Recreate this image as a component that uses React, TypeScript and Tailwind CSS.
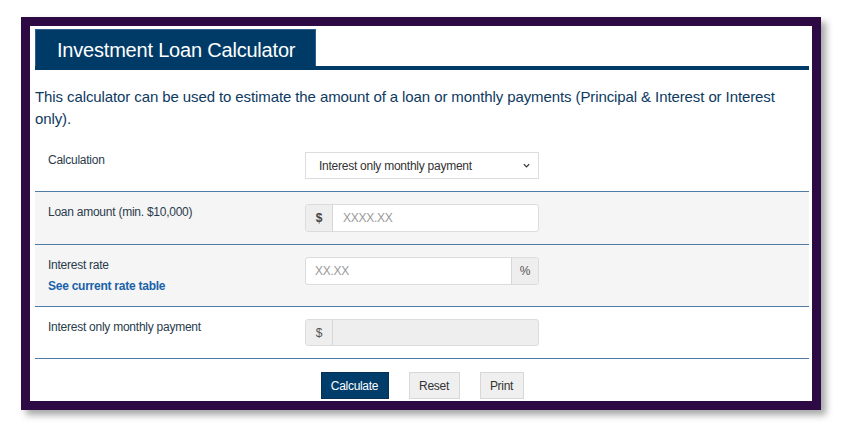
import React from "react";

const font = { fontFamily: '"Liberation Sans", Arial, sans-serif' };

type RowProps = {
  shaded?: boolean;
  label: React.ReactNode;
  children: React.ReactNode;
};

const Row = ({ shaded, label, children }: RowProps) => (
  <div
    className={`flex border-b border-[#4f7ba5] py-3 ${
      shaded ? "bg-[#f5f5f5]" : "bg-white"
    }`}>
    <div className="w-[270px] pl-[13px] text-[12px] leading-[16px] tracking-[-0.25px] text-[#2a3b4c]">
      {label}
    </div>
    <div className="w-[234px]">{children}</div>
  </div>
);

const Addon = ({ children, side }: { children: React.ReactNode; side: "l" | "r" }) => (
  <span
    className={`flex w-[27px] shrink-0 items-center justify-center bg-[#eeeeee] text-[12px] text-[#555] ${
      side === "l" ? "border-r border-[#d6d6d6]" : "border-l border-[#d6d6d6]"
    }`}>
    {children}
  </span>
);

export default function App() {
  return (
    <div className="h-[429px] w-[842px] bg-white pl-[21px] pt-[17px]" style={font}>
      <div className="h-[393px] w-[800px] border-[9px] border-[#2e0a45] bg-white pl-[5px] pr-[3px] pt-[3px] shadow-[5px_5px_7px_rgba(0,0,0,0.35)]">
        <div className="flex border-b-4 border-[#003b68]">
          <div className="flex h-[37px] w-[281px] items-center border border-b-0 border-[#2f5f88] bg-[#003b68] pl-[21px] pt-[4px] text-[20px] tracking-[-0.2px] text-white">
            Investment Loan Calculator
          </div>
        </div>

        <p className="mt-[16px] pr-[20px] text-[15px] leading-[22px] tracking-[-0.1px] text-[#0d3a5f]">
          This calculator can be used to estimate the amount of a loan or monthly
          payments (Principal &amp; Interest or Interest only).
        </p>

        <div className="mt-[10px]">
          <Row label="Calculation">
            <div className="flex h-[27px] items-center justify-between border border-[#dcdcdc] bg-white pl-[13px] pr-[7px] text-[12px] tracking-[-0.25px] text-[#333]">
              <span>Interest only monthly payment</span>
              <svg width="9" height="9" viewBox="0 0 10 10" fill="none">
                <path d="M2 3.5 L5 6.5 L8 3.5" stroke="#333" strokeWidth="1.4" />
              </svg>
            </div>
          </Row>

          <Row shaded label="Loan amount (min. $10,000)">
            <div className="flex h-[28px] overflow-hidden rounded-[3px] border border-[#dcdcdc] bg-white">
              <Addon side="l">
                <span className="font-bold text-[#444]">$</span>
              </Addon>
              <span className="flex items-center pl-[10px] text-[12px] tracking-[-0.25px] text-[#9a9a9a]">
                XXXX.XX
              </span>
            </div>
          </Row>

          <Row
            shaded
            label={
              <div>
                <div>Interest rate</div>
                <a className="mt-[5px] block font-bold text-[#1a62a8]">See current rate table</a>
              </div>
            }>
            <div className="flex h-[28px] overflow-hidden rounded-[3px] border border-[#dcdcdc] bg-white">
              <span className="flex flex-1 items-center pl-[9px] text-[12px] tracking-[-0.25px] text-[#9a9a9a]">
                XX.XX
              </span>
              <Addon side="r">%</Addon>
            </div>
          </Row>

          <Row label="Interest only monthly payment">
            <div className="flex h-[27px] overflow-hidden rounded-[3px] border border-[#dcdcdc] bg-[#eeeeee]">
              <Addon side="l">$</Addon>
            </div>
          </Row>
        </div>

        <div className="mt-[13px] flex justify-center gap-5 text-[12px] tracking-[-0.3px]">
          <button className="h-[27px] w-[68px] border border-[#0a2f50] bg-[#003d6b] text-white">
            Calculate
          </button>
          <button className="h-[27px] w-[51px] border border-[#d8d8d8] bg-[#efefef] text-[#333]">
            Reset
          </button>
          <button className="h-[27px] w-[44px] border border-[#d8d8d8] bg-[#efefef] text-[#333]">
            Print
          </button>
        </div>
      </div>
    </div>
  );
}
